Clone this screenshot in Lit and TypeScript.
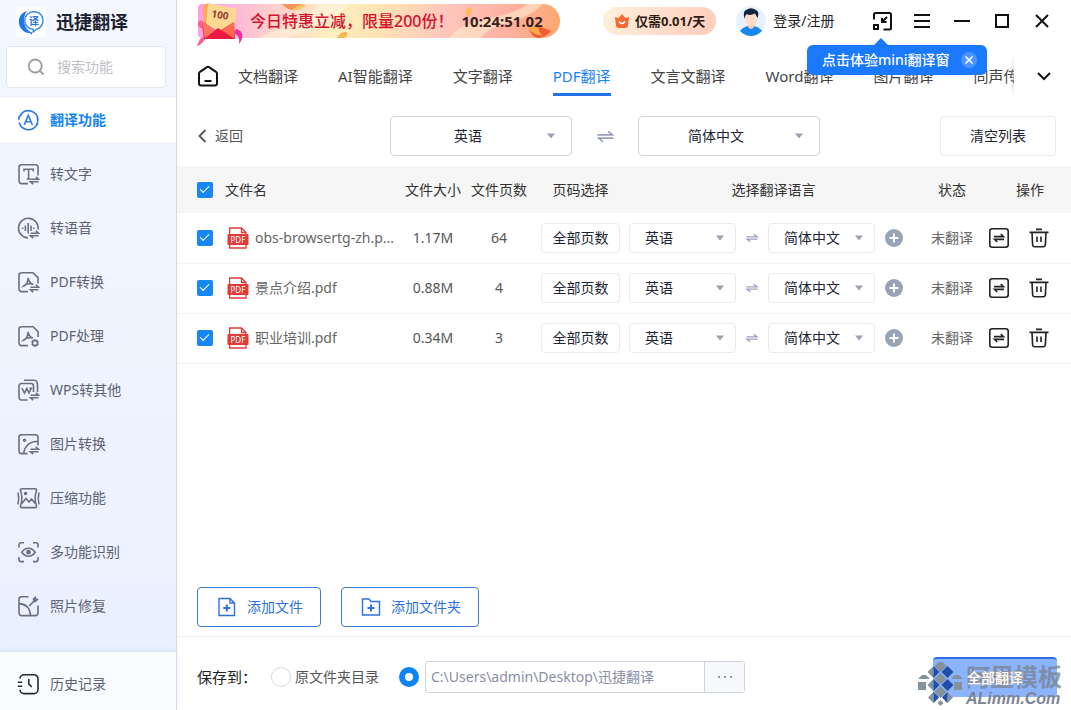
import { LitElement, html, css, svg } from "lit";
import { customElement, state } from "lit/decorators.js";
import { classMap } from "lit/directives/class-map.js";

const swapBadge = svg`<path d="M13.5 16.2H21.5L18.8 13.8M21.5 18.8H13.5L16.2 21.2"/>`;

const navIcons: Record<string, unknown> = {
  translate: svg`<path d="M2.2 13.5A9.6 9.6 0 0 0 19 17M21 11A9.6 9.6 0 0 0 4 5.2M1.6 10.8A9.6 9.6 0 0 1 4 5.2M1.8 8.2L4.6 5.4M20.2 8.5A9.6 9.6 0 0 1 19 17l2-2.6"/><path d="M7.2 16L11.3 6.2L15.4 16M8.6 12.8H14"/>`,
  text: svg`<path d="M11 20.6H4.5A2.5 2.5 0 0 1 2 18.1V4.2A2.5 2.5 0 0 1 4.5 1.7H18.5A2.5 2.5 0 0 1 21 4.2V12.5"/><path d="M7 8.5V6.2H16.2V8.5M11.6 6.2V16M9.6 16H13.6"/>${swapBadge}`,
  audio: svg`<path d="M11 20.9A9.8 9.8 0 1 1 21 12.5"/><path d="M5.6 10.4V12M8.4 8.6V14M11.2 6V16.5M14 8.6V14M16.8 10.4V12"/>${swapBadge}`,
  pdfConvert: svg`<path d="M11 20.6H4.5A2.5 2.5 0 0 1 2 18.1V4.2A2.5 2.5 0 0 1 4.5 1.7H16L21 6.7V12.5"/><path d="M6.4 15.2C9.5 14.4 11.2 10.5 11 7C12 11 13.5 13 16.4 13.2C12.5 12.4 8.5 13 6.4 15.2Z"/>${swapBadge}`,
  pdfEdit: svg`<path d="M11 20.6H4.5A2.5 2.5 0 0 1 2 18.1V4.2A2.5 2.5 0 0 1 4.5 1.7H16L21 6.7V12"/><path d="M6.4 15.2C9.5 14.4 11.2 10.5 11 7C12 11 13.5 13 16 13C12.5 12.4 8.5 13 6.4 15.2Z"/><circle cx="18" cy="18" r="2.6"/><path d="M18 14.2V15.4M18 20.6V21.8M14.7 16.1L15.8 16.7M20.2 19.3L21.3 19.9M14.7 19.9L15.8 19.3M20.2 16.7L21.3 16.1"/>`,
  wps: svg`<path d="M10.5 21H4.5A2.5 2.5 0 0 1 2 18.5V7A2.5 2.5 0 0 1 4.5 4.5H14A2.5 2.5 0 0 1 16.5 7V13M7 1.2H16.8A3.8 3.8 0 0 1 20.5 5V13"/><path d="M4.8 9.2L7.5 14L9.8 9.5L12 14L14.3 9.2H12.5"/>${swapBadge}`,
  image: svg`<path d="M10.5 20.6H4.5A2.5 2.5 0 0 1 2 18.1V4.2A2.5 2.5 0 0 1 4.5 1.7H18.5A2.5 2.5 0 0 1 21 4.2V12.5M6.5 20.4C8 12.5 13 8.5 21 8.3"/><circle cx="7.5" cy="7.2" r="1"/>${swapBadge}`,
  compress: svg`<path d="M5 1.7H18C19.3 1.7 19.8 2.5 19.4 3.7C17.6 9 17.6 13.5 19.4 18.8C19.8 20 19.3 20.6 18 20.6H5C3.7 20.6 3.2 20 3.6 18.8C5.4 13.5 5.4 9 3.6 3.7C3.2 2.5 3.7 1.7 5 1.7ZM1 5.5C2 9.5 2 13.5 1 17.5M22 5.5C21 9.5 21 13.5 22 17.5M4.8 16.5L9 11.5L12 15L14.5 12L18.2 16.5"/><circle cx="8.5" cy="6.5" r=".9"/>`,
  scan: svg`<path d="M2 6.5V3.7A2 2 0 0 1 4 1.7H7M16 1.7H19A2 2 0 0 1 21 3.7V6.5M21 16V18.6A2 2 0 0 1 19 20.6H16M7 20.6H4A2 2 0 0 1 2 18.6V16M4.8 11.2C8.5 5.9 14.5 5.9 18.2 11.2C14.5 16.5 8.5 16.5 4.8 11.2Z"/><circle cx="11.5" cy="11.2" r="1.6" fill="currentColor"/>`,
  repair: svg`<path d="M11.5 1.7H4.5A2.5 2.5 0 0 0 2 4.2V18.1A2.5 2.5 0 0 0 4.5 20.6H18.5A2.5 2.5 0 0 0 21 18.1V10.5M2 8.6C8.5 9 13 13 13.5 20.4"/><path d="M12 10.4L16.5 6L16 3.8L18.8 1.5L18.7 4L21.2 4L19 6.8L17 6.8L13 11Z" fill="currentColor" stroke-width=".8"/>`,
  history: svg`<path d="M3 5.5A4 4 0 0 1 7 1.7H17A4 4 0 0 1 21 5.7V16.6A4 4 0 0 1 17 20.6H7A4 4 0 0 1 3 16.8M.8 9.2H5.2M.8 13.2H5.2M11.8 6V11.2L14.8 14"/>`,
};

const navItems = [
  ["translate", "翻译功能"],
  ["text", "转文字"],
  ["audio", "转语音"],
  ["pdfConvert", "PDF转换"],
  ["pdfEdit", "PDF处理"],
  ["wps", "WPS转其他"],
  ["image", "图片转换"],
  ["compress", "压缩功能"],
  ["scan", "多功能识别"],
  ["repair", "照片修复"],
];

const tabs = ["文档翻译", "AI智能翻译", "文字翻译", "PDF翻译", "文言文翻译", "Word翻译", "图片翻译", "同声传译"];

const files = [
  { name: "obs-browsertg-zh.p...", size: "1.17M", pages: 64 },
  { name: "景点介绍.pdf", size: "0.88M", pages: 4 },
  { name: "职业培训.pdf", size: "0.34M", pages: 3 },
];

@customElement("app-root")
export class AppRoot extends LitElement {
  @state() private activeNav = "translate";
  @state() private activeTab = "PDF翻译";
  @state() private tipOpen = true;

  static styles = css`
    :host {
      display: grid;
      grid-template-columns: 177px minmax(0, 1fr);
      height: 100vh;
      overflow: hidden;
      box-sizing: border-box;
      background: #fff;
      color: #333;
      font: 14px/20px "Noto Sans", "Noto Sans CJK SC", sans-serif;
    }
    *, *::before, *::after { box-sizing: border-box; }
    button, input, select {
      margin: 0;
      padding: 0;
      border: 0;
      background: none;
      color: inherit;
      font: inherit;
      outline: none;
    }
    button { cursor: pointer; white-space: nowrap; }
    a { color: inherit; text-decoration: none; }
    svg { display: block; flex: none; fill: none; stroke: currentColor; }
    svg.solid { stroke: none; }

    .side {
      display: flex;
      flex-direction: column;
      min-height: 0;
      border-right: 1px solid #d5d9e2;
      background: linear-gradient(#f4f7ff, #e9f0fe);
    }
    .brand { display: flex; align-items: center; gap: 10px; height: 46px; padding: 0 16px 3px; }
    .brand h1 { margin: 0; font-size: 18px; line-height: 24px; font-weight: 700; color: #1c2130; }
    .search {
      display: flex;
      align-items: center;
      gap: 12px;
      height: 42px;
      margin: 0 10px 0 6px;
      padding: 0 20px;
      border: 1px solid #e3e7f0;
      border-radius: 4px;
      background: #fff;
      color: #9a9da6;
    }
    .search input { min-width: 0; flex: 1; }
    .search input::placeholder { color: #bfc1c6; opacity: 1; }
    .nav { display: flex; flex-direction: column; gap: 10px; margin-top: 10px; flex: 1; min-height: 0; overflow: hidden; }
    .nav-item {
      display: flex;
      align-items: center;
      gap: 10px;
      height: 44px;
      flex: none;
      padding: 0 17px;
      color: #5d6273;
    }
    .nav-item svg { color: #6a7082; }
    .nav-item.on { background: #fff; color: #1384f5; font-weight: 700; }
    .nav-item.on svg { color: #2f78e8; }
    .side-foot {
      display: flex;
      align-items: center;
      height: 58px;
      padding-top: 6px;
      background: #fafbfe;
      box-shadow: 0 -2px 5px #dbe2f2;
    }
    .side-foot .nav-item svg { color: #252a36; }

    .main { display: flex; flex-direction: column; min-width: 0; min-height: 0; }
    .titlebar { display: flex; align-items: center; height: 44px; padding: 0 19px 2px 21px; }
    .promo {
      position: relative;
      display: flex;
      align-items: center;
      gap: 8px;
      width: 362px;
      height: 34px;
      padding-left: 52px;
      border-radius: 4px 17px 17px 4px;
      background: linear-gradient(100deg, #fd9ee6, #ffc9cd 18%, #fff0c0 38%, #ffe0b4 52%, #ffc6bd 68%, #ffb0a0 86%, #ffa76c);
      font-size: 16px;
      font-weight: 500;
      color: #d4112e;
      white-space: nowrap;
    }
    .promo time { position: relative; font-size: 15px; font-weight: 700; color: #3a1f1a; }
    .promo span { position: relative; }
    .promo .flakes { position: absolute; inset: 0; border-radius: 17px; }
    .promo .envelope { position: absolute; left: -2px; top: -4px; }
    .coupon {
      display: flex;
      align-items: center;
      gap: 5px;
      height: 28px;
      margin-left: 43px;
      padding: 0 11px;
      border-radius: 14px;
      background: linear-gradient(100deg, #fff0dc, #ffcdbb);
      font-size: 13px;
      font-weight: 700;
      color: #2e1c18;
    }
    .login { display: flex; align-items: center; gap: 7px; margin-left: 20px; color: #222; }
    .window { position: relative; display: flex; align-items: center; gap: 20px; margin-left: auto; color: #111; }
    .window > button { width: 20px; height: 20px; }
    .tip {
      position: absolute;
      z-index: 2;
      top: 34px;
      right: 65px;
      display: flex;
      align-items: center;
      justify-content: space-between;
      width: 180px;
      height: 30px;
      padding: 0 10px 0 15px;
      border-radius: 6px;
      background: #1a79ff;
      color: #fff;
      font-weight: 500;
    }
    .tip::before {
      content: "";
      position: absolute;
      left: 66px;
      top: -7px;
      border: 8px solid transparent;
      border-top: 0;
      border-bottom-color: #1a79ff;
    }

    .tabbar { display: flex; align-items: center; height: 62px; padding: 2px 19px 0 20px; }
    .tabs-wrap { position: relative; display: flex; flex: 1; min-width: 0; margin-left: 19px; }
    .tabs {
      display: flex;
      gap: 40px;
      flex: 1;
      min-width: 0;
      overflow: hidden;
      font-size: 15px;
      color: #444;
    }
    .tabs-wrap::after {
      content: "";
      position: absolute;
      inset: 0 0 0 auto;
      width: 5px;
      background: radial-gradient(ellipse at right, #b8b8bc99, #fff0 70%);
    }
    .tab { flex: none; height: 40px; padding-top: 9px; line-height: 22px; border-bottom: 3px solid transparent; white-space: nowrap; }
    .tab.on { color: #1b83f5; border-color: #2173ea; }
    .more { margin-left: 22px; color: #111; }

    .tools {
      display: grid;
      grid-template-columns: 192px auto 1fr;
      align-items: center;
      height: 60px;
      padding: 0 15px 0 21px;
    }
    .back { display: flex; align-items: center; gap: 8px; color: #555; }
    .pair { display: flex; align-items: center; }
    .pick { display: grid; align-items: center; width: 182px; height: 40px; }
    .pick > * { grid-area: 1 / 1; }
    .pick select {
      appearance: none;
      width: 100%;
      height: 100%;
      padding-right: 26px;
      border: 1px solid #d2d4d8;
      border-radius: 4px;
      background: #fff;
      text-align: center;
      color: #1c2433;
    }
    .pick .caret { justify-self: end; margin-right: 16px; fill: #9aa1b3; stroke: none; pointer-events: none; }
    .pick.small { width: 107px; height: 30px; }
    .pick.small select { padding: 0 26px 0 15px; border-color: #e8eaee; text-align: left; }
    .pick.small .caret { margin-right: 11px; }
    .swap { width: 66px; display: grid; place-items: center; color: #9aa3b6; }
    .swap.small { width: 32px; }
    .clear { justify-self: end; width: 116px; height: 40px; border: 1px solid #e8eaee; border-radius: 4px; color: #1c2433; }

    table { width: 100%; border-collapse: collapse; table-layout: fixed; }
    th { height: 47px; padding: 0; background: #f6f6f6; font-weight: 400; white-space: nowrap; color: #333; }
    td { height: 50px; padding: 0; border-bottom: 1px solid #f3f4f6; text-align: center; }
    .c-check { width: 48px; }
    .c-num { width: 66px; }
    .c-range { width: 97px; }
    .c-lang { width: 289px; }
    .c-state { width: 68px; }
    .c-act { width: 85px; }
    th.first, td.first { padding-left: 20px; text-align: left; }
    th.name { text-align: left; }
    input[type="checkbox"] {
      appearance: none;
      display: block;
      width: 16px;
      height: 16px;
      border-radius: 2px;
      background: #1687f5;
    }
    input[type="checkbox"]::after {
      content: "";
      display: block;
      width: 9px;
      height: 5px;
      margin: 5px 3px;
      border: solid #fff;
      border-width: 0 0 1px 1px;
      transform: rotate(-45deg) translate(1px, -1px);
    }
    input[type="checkbox"]:not(:checked) { background: #fff; border: 1px solid #ccc; }
    .file { display: flex; align-items: center; gap: 6px; padding-left: 2px; color: #666; }
    .file span { overflow: hidden; text-overflow: ellipsis; white-space: nowrap; }
    .num { color: #555; }
    .range { width: 79px; height: 30px; border: 1px solid #e8eaee; border-radius: 4px; color: #1c2433; }
    .langs { display: flex; align-items: center; }
    .plus { margin-left: 10px; }
    .status { color: #666; }
    .acts { display: flex; gap: 20px; padding-left: 3px; color: #222; }
    th.act { padding-left: 3px; }

    .adds { display: flex; gap: 20px; margin-top: auto; padding: 0 20px 9px; }
    .add {
      display: flex;
      align-items: center;
      gap: 10px;
      height: 40px;
      padding: 0 17px 0 19px;
      border: 1px solid #3c7cdc;
      border-radius: 4px;
      color: #2d71e0;
    }
    .foot { display: flex; align-items: center; height: 74px; padding: 6px 14px 0 20px; border-top: 1px solid #ebedf2; }
    .foot h2 { margin: 0 16px 0 0; width: 58px; font-size: 15px; font-weight: 400; color: #222; white-space: nowrap; }
    .radio { display: flex; align-items: center; gap: 4px; margin-right: 20px; color: #555; white-space: nowrap; }
    input[type="radio"] { appearance: none; width: 20px; height: 20px; border: 1px solid #d8d9dc; border-radius: 50%; background: #fff; }
    input[type="radio"]:checked { border: 6px solid #0b84f8; }
    .path { display: flex; width: 320px; height: 32px; margin-left: 6px; border: 1px solid #ccd3df; border-radius: 3px; color: #8a8ea5; }
    .path input { flex: 1; min-width: 0; padding: 0 5px; }
    .path button { display: grid; place-items: center; width: 40px; border-left: 1px solid #ccd3df; background: #f7f8fb; }
    .run-wrap {
      position: relative;
      margin-left: auto;
      border-top: 2px solid #2f70e8;
      border-radius: 4px;
      background: #8bb4fc;
    }
    .run { position: relative; width: 124px; height: 38px; color: #fff; font-weight: 500; text-shadow: 0 0 1px #e0a868; }
    .mark { position: absolute; left: -16px; top: 3px; display: flex; gap: 3px; pointer-events: none; color: #7b8494; white-space: nowrap; }
    .mark b { display: block; font-size: 24px; line-height: 29px; font-weight: 700; opacity: 0.8; }
    .mark i { display: block; font: italic 700 16px/16px "Liberation Sans", sans-serif; }
  `;

  private icon(name: string) {
    return html`<svg width="23" height="23" viewBox="0 0 23 23" stroke-width="1.6" aria-hidden="true">${navIcons[name]}</svg>`;
  }

  private pick(label: string, value: string, other: string, small = false) {
    return html`<label class=${classMap({ pick: true, small })}>
      <select aria-label=${label}><option>${value}</option><option>${other}</option></select>
      <svg class="caret" width="10" height="6" viewBox="0 0 10 6"><path d="M1 .5H9L5 5.5Z"/></svg>
    </label>`;
  }

  private swap(small = false) {
    const size = small ? 12 : 17;
    return html`<button class=${classMap({ swap: true, small })} aria-label="互换语言">
      <svg width=${size} height=${size} viewBox="0 0 17 17" stroke-width="1.7"><path d="M.5 6.8H15.5L11 3.3M16.5 10.2H1.5L6 13.7"/></svg>
    </button>`;
  }

  private renderSide() {
    return html`<aside class="side">
      <header class="brand">
        <svg class="solid" width="30" height="30" viewBox="0 0 30 30">
          <rect width="30" height="30" rx="3" fill="#fdfeff"/>
          <path d="M11 4C2 6 .5 17 6 22.5C9 26 12 26 14 26L16 28V25.5C8 23 5.5 11 11 4Z" fill="#2176ee"/>
          <path d="M17.5 4.8C24 4.8 27 9 27 13.5C27 18 24 21.5 20.5 22.2L17.2 25V22.3C12 22 8.8 18 8.8 13.5C8.8 9 12 4.8 17.5 4.8Z" fill="#fff" stroke="#3a86ef" stroke-width="1.4"/>
          <text x="13" y="17.5" font-size="10" font-weight="700" fill="#2a74e8">译</text>
        </svg>
        <h1>迅捷翻译</h1>
      </header>
      <label class="search">
        <svg width="18" height="18" viewBox="0 0 18 18" stroke-width="1.8"><circle cx="8.2" cy="8" r="6.5"/><path d="M13 13L16.5 16.5"/></svg>
        <input type="text" placeholder="搜索功能" aria-label="搜索功能">
      </label>
      <nav class="nav">
        ${navItems.map(([id, label]) => html`<a href="#" class=${classMap({ "nav-item": true, on: id === this.activeNav })}
          @click=${(e: Event) => { e.preventDefault(); this.activeNav = id; }}>${this.icon(id)}${label}</a>`)}
      </nav>
      <footer class="side-foot"><a class="nav-item" href="#">${this.icon("history")}历史记录</a></footer>
    </aside>`;
  }

  private renderTitlebar() {
    return html`<header class="titlebar">
      <div class="promo">
        <svg class="flakes solid" width="362" height="34" viewBox="0 0 362 34">
          <path d="M250 34C275 8 300 20 330 0H345C318 25 300 14 282 34Z" fill="#ffe4c8" opacity=".7"/>
          <path d="M60 34C85 20 100 28 120 0H150C130 26 100 30 90 34Z" fill="#fff3dc" opacity=".6"/>
          <path d="M84 0H104C103 5 98 7 94 6Q88 5 84 0Z" fill="#f7925c"/><path d="M94 6Q100 1 104 0L108 1Q104 7 94 6Z" fill="#fbc36a"/>
          <path d="M139 34Q142 27 149 28Q150 34 145 34Z" fill="#f9b64e"/>
          <path d="M268 6Q273 0 274 6Q273 13 268 12Z" fill="#ffb95c"/>
          <path d="M331 25Q340 20 353 27Q347 34 340 34Q333 32 331 25Z" fill="#f25a35"/><path d="M331 25Q334 21 341 24Q340 29 345 31Q336 32 331 25Z" fill="#ffab45"/>
        </svg>
        <svg class="envelope solid" width="50" height="48" viewBox="0 0 50 48">
          <path d="M5 20C0 22 2 28 6 28L8 37C3 38 3 42 1 46C6 45 8 40 10 38Z" fill="#f95b92"/>
          <path d="M40 29C48 31 48 38 43 44C44 38 42 35 38 33Z" fill="#f02fa0"/>
          <path d="M12 3L41 9L37 32L9 27Z" fill="#ffd894"/><path d="M12 3L7 6L8 22L10 25Z" fill="#ffa84d"/>
          <text x="15" y="17" font-size="10" font-weight="700" fill="#93402c" transform="rotate(9 15 17)">100</text>
          <path d="M6 21L22 32L38 22L39 39H8Z" fill="#f02546"/><path d="M6 21L23 33L9 39Z" fill="#ff765e"/><path d="M38 22L22 33L38 38Z" fill="#ff6b4c"/><path d="M8 39L22 28L39 39Z" fill="#e91b42"/>
        </svg>
        <span>今日特惠立减，限量200份！</span><time>10:24:51.02</time>
      </div>
      <button class="coupon">
        <svg class="solid" width="16" height="16" viewBox="0 0 16 16"><path d="M1 4L4.5 5L8 1L11.5 5L15 4L14 13Q13.8 15 11.5 15H4.5Q2.2 15 2 13Z" fill="#f36a35"/><path d="M5 8.5Q8 12.5 11 8.5" stroke="#fff" stroke-width="1.6"/></svg>
        仅需0.01/天
      </button>
      <a class="login" href="#">
        <svg class="solid" width="30" height="30" viewBox="0 0 30 30">
          <circle cx="15" cy="15" r="15" fill="#e6f3ff"/>
          <path d="M4 25Q7 21 12 20H18Q23 21 26 25Q21 30 15 30Q9 30 4 25Z" fill="#1888f2"/>
          <path d="M12 17H18V21Q15 25 12 21Z" fill="#ffc8a8"/><ellipse cx="15.3" cy="13" rx="6" ry="7" fill="#ffdcc5"/>
          <path d="M8.5 13Q6.5 5 10 4Q15 .5 20 4Q24 6 21.5 12Q20 9 19 7.5Q14 10 10.5 8Q9 10 8.5 13Z" fill="#14233c"/>
        </svg>
        登录/注册
      </a>
      <div class="window">
        <button aria-label="迷你窗口"><svg width="20" height="20" viewBox="0 0 20 20" stroke-width="2"><path d="M2 8.5V3.5A1.5 1.5 0 0 1 3.5 2H17.5A1.5 1.5 0 0 1 19 3.5V17A1.5 1.5 0 0 1 17.5 18.5H11.5M15 6L10.2 10.8M10 6.8V11H14.5"/><rect x="2" y="14" width="4" height="4"/></svg></button>
        <button aria-label="菜单"><svg width="20" height="20" viewBox="0 0 20 20" stroke-width="2"><path d="M2 4H18M2 10H18M2 16H18"/></svg></button>
        <button aria-label="最小化"><svg width="20" height="20" viewBox="0 0 20 20" stroke-width="2"><path d="M2 10H18"/></svg></button>
        <button aria-label="最大化"><svg width="20" height="20" viewBox="0 0 20 20" stroke-width="2"><path d="M4 4H16V16H4Z"/></svg></button>
        <button aria-label="关闭"><svg width="20" height="20" viewBox="0 0 20 20" stroke-width="2"><path d="M4 4L16 16M16 4L4 16"/></svg></button>
        ${this.tipOpen ? html`<div class="tip">点击体验mini翻译窗
          <button aria-label="关闭提示" @click=${() => (this.tipOpen = false)}><svg width="16" height="16" viewBox="0 0 16 16" stroke-width="1.6"><circle cx="8" cy="8" r="8" fill="#4a95ff" stroke="none"/><path d="M4.5 4.5L11.5 11.5M11.5 4.5L4.5 11.5"/></svg></button>
        </div>` : ""}
      </div>
    </header>`;
  }

  private renderTable() {
    return html`<table>
      <colgroup><col class="c-check"><col><col class="c-num"><col class="c-num"><col class="c-range"><col class="c-lang"><col class="c-state"><col class="c-act"></colgroup>
      <thead><tr>
        <th class="first"><input type="checkbox" checked aria-label="全选"></th>
        <th class="name">文件名</th><th>文件大小</th><th>文件页数</th><th>页码选择</th><th>选择翻译语言</th><th>状态</th><th class="act">操作</th>
      </tr></thead>
      <tbody>${files.map((f) => html`<tr>
        <td class="first"><input type="checkbox" checked aria-label=${f.name}></td>
        <td><div class="file">
          <svg class="solid" width="22" height="22" viewBox="0 0 22 22"><path d="M2.7 7V1H14.5L19 5.5V7M14.5 1V5.5H19M2.7 17V21H19V17" stroke="#dc3c38" stroke-width="1.3"/><rect x=".5" y="7" width="21" height="11" rx="1" fill="#e23a35"/><text x="3.5" y="15.5" font-size="8" fill="#fff">PDF</text></svg>
          <span>${f.name}</span></div></td>
        <td class="num">${f.size}</td><td class="num">${f.pages}</td>
        <td><button class="range">全部页数</button></td>
        <td><div class="langs">${this.pick("源语言", "英语", "简体中文", true)}${this.swap(true)}${this.pick("目标语言", "简体中文", "英语", true)}
          <button class="plus" aria-label="添加语言"><svg width="18" height="18" viewBox="0 0 18 18"><circle cx="9" cy="9" r="9" fill="#98a4b5" stroke="none"/><path d="M9 4.5V13.5M4.5 9H13.5" stroke="#fff" stroke-width="2"/></svg></button></div></td>
        <td class="status">未翻译</td>
        <td><div class="acts">
          <button aria-label="翻译"><svg width="20" height="20" viewBox="0 0 20 20" stroke-width="1.6"><rect x=".8" y=".8" width="18.4" height="18.4" rx="2.5"/><path d="M5 8.6H14.5L11.8 6M15 11.4H5.5L8.2 14"/></svg></button>
          <button aria-label="删除"><svg width="20" height="20" viewBox="0 0 20 20" stroke-width="1.6"><path d="M.5 4.4H19.5M7 1.4H13M3 4.4L3.6 16.5Q3.7 18.8 5.8 18.8H14.2Q16.3 18.8 16.4 16.5L17 4.4M8 8.5V14M12 8.5V14"/></svg></button>
        </div></td>
      </tr>`)}</tbody>
    </table>`;
  }

  private renderFoot() {
    return html`<footer class="foot">
      <h2>保存到：</h2>
      <label class="radio"><input type="radio" name="dest">原文件夹目录</label>
      <input type="radio" name="dest" checked aria-label="自定义目录">
      <div class="path"><input type="text" aria-label="保存路径" value="C:\\Users\\admin\\Desktop\\迅捷翻译">
        <button aria-label="浏览"><svg class="solid" width="16" height="4" viewBox="0 0 16 4"><g fill="#777c8c"><circle cx="2" cy="2" r="1"/><circle cx="8" cy="2" r="1"/><circle cx="14" cy="2" r="1"/></g></svg></button></div>
      <div class="run-wrap">
        <div class="mark">
          <svg class="solid" width="46" height="46" viewBox="0 0 46 46">
            <g fill="#85929c">
              <path d="M23.500 -2L29.500 4L23.500 10L17.500 4Z M23.500 11L29.500 17L23.500 23L17.500 17Z M23.500 24L29.500 30L23.500 36L17.500 30Z M23.500 38L26.500 41L23.500 44L20.500 41Z"/>
              <path d="M16.500 4V16L10.500 10Z M16.500 17V29L10.500 23Z M16.500 30V41L11 35.500Z M30.500 30V41L36 35.500Z"/>
              <path d="M5 13H9L13 17H1Z M38 13H42L46 17H34Z M1 20H9V28H1Z M37 20H45V28H37Z"/>
            </g>
            <g fill="#1e50a8">
              <path d="M16.500 4V16L22.500 10Z M16.500 17V29L22.500 23Z M16.500 30V41L22 35.500Z M30.500 30V41L25 35.500Z"/>
              <path d="M30.500 4L36.500 10L30.500 16L24.500 10Z M30.500 17L36.500 23L30.500 29L24.500 23Z"/>
            </g>
          </svg>
          <div><b>阿里模板</b><i>ALimm.Com</i></div>
        </div>
        <button class="run">全部翻译</button>
      </div>
    </footer>`;
  }

  render() {
    return html`${this.renderSide()}
      <main class="main">
        ${this.renderTitlebar()}
        <div class="tabbar">
          <a href="#" aria-label="首页"><svg width="22" height="22" viewBox="0 0 22 22" stroke-width="2"><path stroke="#111" d="M2 8.5Q2 7.5 3 6.8L10 2.2Q11 1.5 12 2.2L19 6.8Q20 7.5 20 8.5V18.5Q20 20.5 18 20.5H4Q2 20.5 2 18.5ZM7.5 16H14.5"/></svg></a>
          <nav class="tabs-wrap"><div class="tabs">
            ${tabs.map((t) => html`<a href="#" class=${classMap({ tab: true, on: t === this.activeTab })}
              @click=${(e: Event) => { e.preventDefault(); this.activeTab = t; }}>${t}</a>`)}
          </div></nav>
          <button class="more" aria-label="更多"><svg width="16" height="16" viewBox="0 0 16 16" stroke-width="2"><path d="M2 5L8 11L14 5"/></svg></button>
        </div>
        <section class="tools">
          <a class="back" href="#"><svg width="9" height="14" viewBox="0 0 9 14" stroke-width="1.8"><path d="M7.5 1L1.5 7L7.5 13"/></svg>返回</a>
          <div class="pair">${this.pick("源语言", "英语", "简体中文")}${this.swap()}${this.pick("目标语言", "简体中文", "英语")}</div>
          <button class="clear">清空列表</button>
        </section>
        ${this.renderTable()}
        <div class="adds">
          <button class="add"><svg width="20" height="20" viewBox="0 0 20 20" stroke-width="1.4"><path d="M2 1.5H13L17.5 6V18.5H2ZM13 1.5V6H17.5"/><path d="M9.8 7.5V14.5M6.3 11H13.3" stroke-width="2"/></svg>添加文件</button>
          <button class="add"><svg width="20" height="20" viewBox="0 0 20 20" stroke-width="1.4"><path d="M1.5 2H8L10 4.5H18.5V18H1.5Z"/><path d="M10 7.5V14.5M6.5 11H13.5" stroke-width="2"/></svg>添加文件夹</button>
        </div>
        ${this.renderFoot()}
      </main>`;
  }
}
